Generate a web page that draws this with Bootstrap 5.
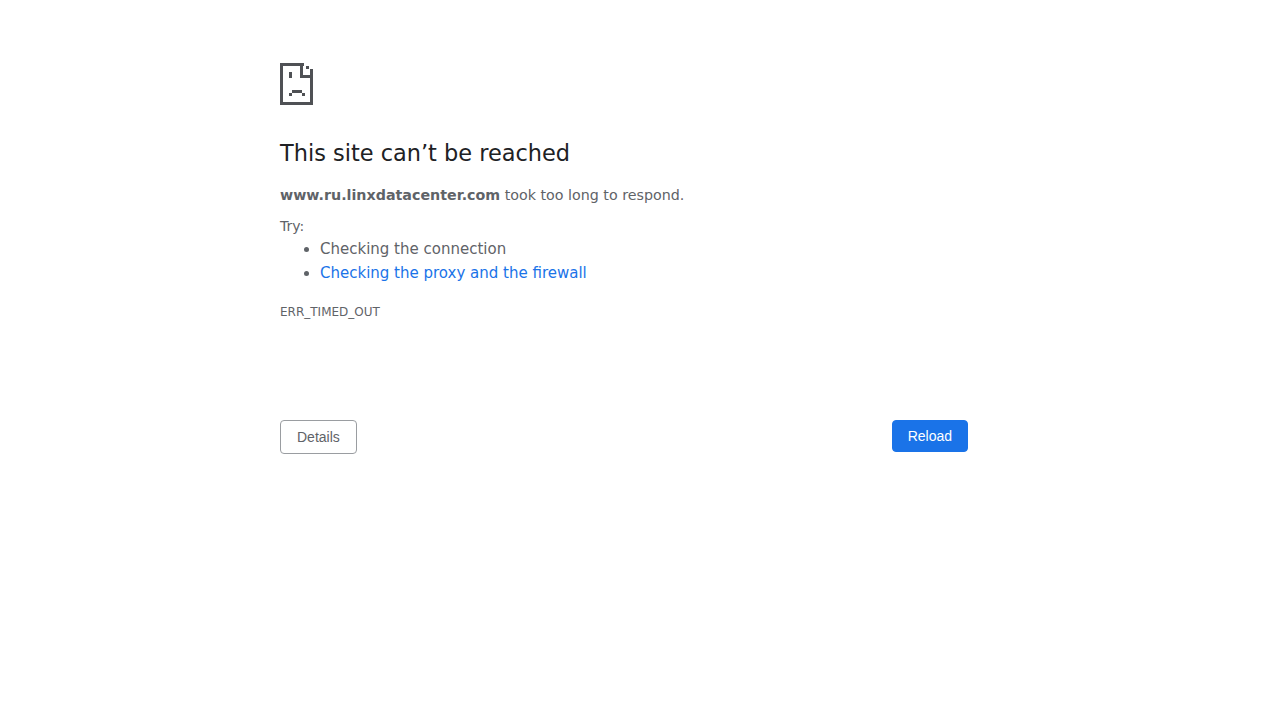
<!DOCTYPE html>
<html lang="en">
<head>
  <meta charset="UTF-8" />
  <meta name="viewport" content="width=device-width,initial-scale=1.0" />
  <title>www.ru.linxdatacenter.com</title>
  <link href="https://cdn.jsdelivr.net/npm/bootstrap@5.3.0/dist/css/bootstrap.min.css" rel="stylesheet" />
  <style>
    body { background: #fff; color: #5f6368; font-family: "DejaVu Sans", sans-serif; font-size: 15px; line-height: 21px; }
    .err-wrap { width: 720px; padding-top: 63px; padding-right: 32px; }
    .err-icon { display: block; width: 33px; height: 42px; margin-bottom: 34px; }
    .err-title { color: #202124; font-family: "DejaVu Sans", sans-serif; font-size: 22.45px; font-weight: 400; line-height: 29px; margin-bottom: 17px; }
    .err-host { font-size: 14.26px; margin-bottom: 10px; }
    .err-try { font-size: 14px; line-height: 21px; }
    .err-list { padding-left: 40px; margin-bottom: 0; }
    .err-list li { line-height: 24px; }
    .err-link { color: #1a73e8; text-decoration: none; }
    .err-code { font-size: 12px; line-height: 16px; margin-top: 19px; margin-bottom: 100px; }
    .err-btn { font-family: "Liberation Sans", Arial, sans-serif; font-size: 14px; line-height: 16px; border-radius: 4px; }
    .btn-details { color: #5f6368; background: #fff; border: 1px solid #9a9da1; padding: 8px 16px; height: 34px; }
    .btn-reload { color: #fff; background: #1a73e8; border: 1px solid #1a73e8; padding: 7px 15px; height: 32px; }
    .btn-reload:hover { color: #fff; background: #1a73e8; }
  </style>
</head>
<body>
  <div class="err-wrap mx-auto">
    <!-- sad page icon, drawn on its pixel grid -->
    <svg class="err-icon" viewBox="0 0 33 42" shape-rendering="crispEdges" fill="#4f5155" aria-hidden="true">
      <rect x="0" y="0" width="3" height="42" />
      <rect x="0" y="0" width="24" height="3" />
      <rect x="0" y="39" width="33" height="3" />
      <rect x="30" y="6" width="3" height="36" />
      <rect x="20" y="0" width="3" height="15" />
      <rect x="20" y="12" width="13" height="3" />
      <rect x="26" y="3" width="3" height="3" />
      <rect x="9" y="9" width="3" height="6" />
      <rect x="12" y="27" width="10" height="3" />
      <rect x="9" y="30" width="3" height="3" />
      <rect x="22" y="30" width="3" height="3" />
    </svg>
    <h1 class="err-title">This site can’t be reached</h1>
    <p class="err-host"><strong>www.ru.linxdatacenter.com</strong> took too long to respond.</p>
    <div class="err-try">Try:</div>
    <ul class="err-list">
      <li>Checking the connection</li>
      <li><a class="err-link" href="#">Checking the proxy and the firewall</a></li>
    </ul>
    <div class="err-code">ERR_TIMED_OUT</div>
    <div class="d-flex justify-content-between align-items-start">
      <button type="button" class="btn err-btn btn-details">Details</button>
      <button type="button" class="btn err-btn btn-reload">Reload</button>
    </div>
  </div>
  <script src="https://cdn.jsdelivr.net/npm/bootstrap@5.3.0/dist/js/bootstrap.bundle.min.js"></script>
</body>
</html>
